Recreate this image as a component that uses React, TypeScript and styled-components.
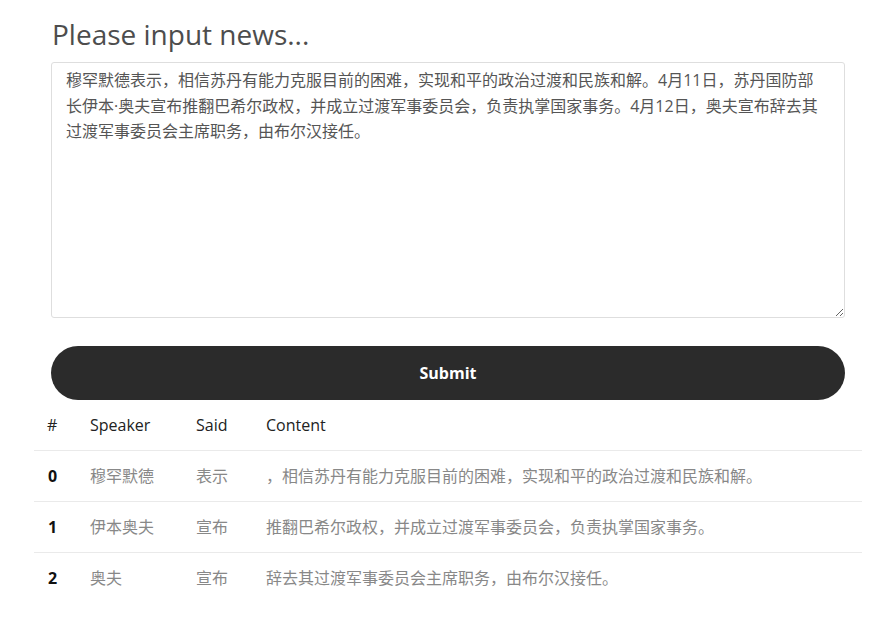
import React from "react";
import styled, { createGlobalStyle } from "styled-components";

const Global = createGlobalStyle`
  html, body { margin: 0; padding: 0; background: #fff; }
  body { font-family: "Open Sans", "Noto Sans CJK SC", sans-serif; }
`;

const Page = styled.div`
  padding: 0 16px 0 34px;
`;

const Form = styled.div`
  padding: 0 17px;
  display: flex;
  flex-direction: column;
`;

const Title = styled.h1`
  margin: 17px 0 11px 1px;
  font-size: 28px;
  line-height: 34px;
  font-weight: 400;
  color: #4d4d4d;
`;

const TextArea = styled.textarea`
  box-sizing: border-box;
  width: 100%;
  height: 256px;
  margin: 0;
  padding: 5px 20px 5px 14px;
  border: 1px solid #dedede;
  border-radius: 3px;
  font-family: "Open Sans", "Noto Sans CJK SC", sans-serif;
  font-size: 16px;
  line-height: 25.5px;
  color: #555;
  resize: vertical;
  outline: none;
`;

const SubmitButton = styled.button`
  margin-top: 28px;
  height: 54px;
  width: 100%;
  border: none;
  border-radius: 27px;
  background: #2b2b2b;
  color: #fff;
  font-family: "Open Sans", sans-serif;
  font-weight: 700;
  font-size: 16px;
  cursor: pointer;
`;

const Table = styled.table`
  width: 100%;
  table-layout: fixed;
  border-collapse: collapse;
  font-size: 16px;
`;

const Th = styled.th<{ $w?: number }>`
  box-sizing: border-box;
  text-align: left;
  font-weight: 400;
  color: #222;
  padding: 13px 12px;
  line-height: 24px;
  width: ${(p) => (p.$w ? `${p.$w}px` : "auto")};
  &:first-child { padding-left: 13px; padding-right: 0; }
`;

const Tr = styled.tr`
  border-top: 1px solid #eaeaea;
`;

const Td = styled.td<{ $index?: boolean }>`
  padding: 13px 12px;
  line-height: 24px;
  color: ${(p) => (p.$index ? "#111" : "#888")};
  font-weight: ${(p) => (p.$index ? 700 : 400)};
  &:first-child { padding-left: 14px; padding-right: 0; }
`;

const rows = [
  { speaker: "穆罕默德", said: "表示", content: "，相信苏丹有能力克服目前的困难，实现和平的政治过渡和民族和解。" },
  { speaker: "伊本奥夫", said: "宣布", content: "推翻巴希尔政权，并成立过渡军事委员会，负责执掌国家事务。" },
  { speaker: "奥夫", said: "宣布", content: "辞去其过渡军事委员会主席职务，由布尔汉接任。" },
];

const text =
  "穆罕默德表示，相信苏丹有能力克服目前的困难，实现和平的政治过渡和民族和解。4月11日，苏丹国防部长伊本·奥夫宣布推翻巴希尔政权，并成立过渡军事委员会，负责执掌国家事务。4月12日，奥夫宣布辞去其过渡军事委员会主席职务，由布尔汉接任。";

export default function App() {
  return (
    <Page>
      <Global />
      <Form>
        <Title>Please input news...</Title>
        <TextArea defaultValue={text} />
        <SubmitButton>Submit</SubmitButton>
      </Form>
      <Table>
        <thead>
          <tr>
            <Th $w={44}>#</Th>
            <Th $w={106}>Speaker</Th>
            <Th $w={70}>Said</Th>
            <Th>Content</Th>
          </tr>
        </thead>
        <tbody>
          {rows.map((r, i) => (
            <Tr key={i}>
              <Td $index>{i}</Td>
              <Td>{r.speaker}</Td>
              <Td>{r.said}</Td>
              <Td>{r.content}</Td>
            </Tr>
          ))}
        </tbody>
      </Table>
    </Page>
  );
}
